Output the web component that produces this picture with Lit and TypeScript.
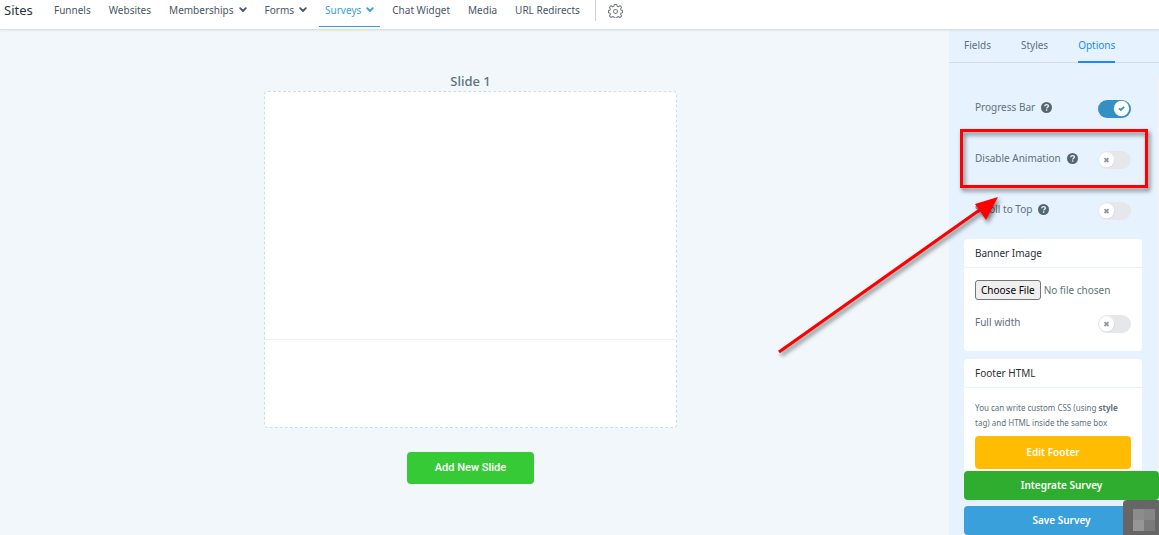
import { LitElement, html, svg, css, nothing } from "lit";
import { customElement, property, state } from "lit/decorators.js";
import { classMap } from "lit/directives/class-map.js";

const chevron = html`<svg class="chevron" viewBox="0 0 8 6" aria-hidden="true">
  <path d="M1.2 1.2 4 4 6.8 1.2" fill="none" stroke="currentColor" stroke-width="1.8" stroke-linecap="round" stroke-linejoin="round" />
</svg>`;

const help = html`<svg class="help" viewBox="0 0 12 12" role="img" aria-label="Help">
  <circle cx="6" cy="6" r="6" fill="currentColor" />
  <path d="M4 4.7c.1-1.2.9-1.9 2.1-1.9s2 .7 2 1.6c0 1.3-1.9 1.3-1.9 2.7" fill="none" stroke="#e6f2fe" stroke-width="1.5" />
  <rect x="5.3" y="8" width="1.7" height="1.6" rx=".5" fill="#e6f2fe" />
</svg>`;

@customElement("toggle-row")
export class ToggleRow extends LitElement {
  @property() label = "";
  @property({ type: Boolean }) on = false;
  @property({ type: Boolean }) hint = false;

  static styles = css`
    :host {
      display: flex;
      justify-content: space-between;
      align-items: flex-start;
      color: #607179;
    }
    .text {
      display: flex;
      align-items: center;
      gap: 6px;
      line-height: 14px;
    }
    .help {
      width: 11px;
      height: 11px;
      color: #546672;
    }
    .switch {
      display: grid;
      width: 33px;
      height: 18px;
    }
    .switch > * {
      grid-area: 1 / 1;
    }
    .box {
      appearance: none;
      margin: 0;
      border-radius: 9px;
      background: #e6e7eb;
      cursor: pointer;
    }
    .box:checked {
      background: #3490c4;
    }
    .knob {
      width: 33px;
      height: 18px;
      pointer-events: none;
    }
  `;

  render() {
    return html`
      <span class="text"><label for="box">${this.label}</label>${this.hint ? help : nothing}</span>
      <span class="switch">
        <input
          class="box"
          id="box"
          type="checkbox"
          .checked=${this.on}
          @change=${(e: Event) => (this.on = (e.target as HTMLInputElement).checked)}
        />
        <svg class="knob" viewBox="0 0 33 18" aria-hidden="true">
          ${this.on
            ? svg`<circle cx="23.5" cy="8.5" r="7.7" fill="#fff" />
                <path d="M21 8.3 22.8 10 26.2 6.9" fill="none" stroke="#3490c4" stroke-width="1.8" />`
            : svg`<circle cx="9" cy="9.4" r="7.6" fill="#cfd3da" />
                <circle cx="8.6" cy="8.8" r="7.6" fill="#fff" />
                <path d="M6.5 7.2 10.5 11M10.5 7.2 6.5 11" fill="none" stroke="#9097a8" stroke-width="1.8" />`}
        </svg>
      </span>
    `;
  }
}

@customElement("app-root")
export class AppRoot extends LitElement {
  @state() private section = "Surveys";
  @state() private tab = "Options";

  private links = [
    { name: "Funnels" },
    { name: "Websites" },
    { name: "Memberships", menu: true },
    { name: "Forms", menu: true },
    { name: "Surveys", menu: true },
    { name: "Chat Widget" },
    { name: "Media" },
    { name: "URL Redirects" },
  ];

  static styles = css`
    :host {
      display: grid;
      grid-template-rows: auto 1fr;
      position: relative;
      height: 100vh;
      overflow: hidden;
      background: #f1f7fa;
      color: #607179;
      font: 10px/15px "Noto Sans", "Open Sans", sans-serif;
    }
    * {
      box-sizing: border-box;
    }
    a {
      color: inherit;
      text-decoration: none;
    }
    .topbar {
      display: flex;
      align-items: flex-start;
      height: 30px;
      padding-left: 4px;
      background: #fff;
      border-bottom: 1px solid #d9e0e4;
      box-shadow: 0 1px 2px #0000000f;
      color: #4a5565;
      z-index: 1;
    }
    .title {
      width: 44px;
      margin: 0;
      font-size: 13px;
      line-height: 20px;
      font-weight: 400;
      color: #2a3342;
    }
    .nav {
      display: flex;
      gap: 6px;
    }
    .link {
      display: flex;
      align-items: center;
      gap: 5px;
      height: 27px;
      padding: 0 6px 6px;
      border-bottom: 1px solid transparent;
      white-space: nowrap;
    }
    .link.current {
      color: #37a0dd;
      border-color: #37a0dd;
    }
    .chevron {
      width: 8px;
      height: 6px;
    }
    .settings {
      display: flex;
      height: 21px;
      margin-left: 9px;
      padding: 3px 12px 0;
      border: 0;
      border-left: 1px solid #cfd3d8;
      background: none;
      color: #777d85;
    }
    .gear {
      width: 15px;
      height: 15px;
    }
    .body {
      display: grid;
      grid-template-columns: 1fr 210px;
      min-height: 0;
    }
    .canvas {
      display: flex;
      flex-direction: column;
      align-items: center;
      padding: 41px 8px 0 0;
    }
    .slide-title {
      margin: 0;
      font-size: 13px;
      line-height: 20px;
      font-weight: 500;
    }
    .slide {
      display: grid;
      grid-template-rows: 247px 88px;
      width: 100%;
      max-width: 413px;
      border: 1px dashed #cbdfe9;
      border-radius: 4px;
      background: #fff;
    }
    .slide-foot {
      border-top: 1px solid #eef2f5;
    }
    .button {
      border: 0;
      border-radius: 4px;
      color: #fff;
      font: 600 10px/15px "Noto Sans", "Open Sans", sans-serif;
      cursor: pointer;
    }
    .add {
      margin-top: 24px;
      width: 127px;
      height: 32px;
      padding-bottom: 3px;
      background: #37ca37;
      font: 500 11px/15px Roboto, sans-serif;
    }
    .panel {
      display: flex;
      flex-direction: column;
      min-height: 0;
      background: #e6f2fe;
    }
    .tabs {
      display: flex;
      gap: 30px;
      height: 33px;
      padding-left: 15px;
      border-bottom: 1px solid #d3dce3;
    }
    .tab {
      height: 33px;
      padding: 0;
      border: 0;
      border-bottom: 2px solid transparent;
      background: none;
      color: #607179;
      font: inherit;
    }
    .tab.current {
      color: #188bf6;
      border-color: #188bf6;
    }
    .scroll {
      flex: 1;
      min-height: 0;
      overflow: hidden;
      margin-top: 15px;
      border-right: 2px solid #f0f2f4;
      padding: 22px 15px 0;
    }
    .rows {
      display: grid;
      gap: 33px;
      padding: 0 11px 19px;
    }
    .card {
      margin-bottom: 8px;
      border-radius: 4px;
      background: #fff;
    }
    .card-title {
      margin: 0;
      padding: 7px 11px 6px;
      border-bottom: 1px solid #e6f2fe;
      font-size: 10px;
      line-height: 15px;
      font-weight: 400;
      color: #2a3135;
    }
    .card-body {
      padding: 12px 11px 18px;
    }
    .file {
      display: block;
      width: 100%;
      margin-bottom: 15px;
      font: inherit;
      color: #607179;
    }
    .file::file-selector-button {
      height: 20px;
      margin-right: 3px;
      padding: 0 5px;
      border: 1px solid #767676;
      border-radius: 3px;
      background: #efefef;
      color: #000;
      font: inherit;
    }
    .note {
      margin: 0 0 6px;
      font-size: 8px;
      line-height: 15px;
    }
    .edit {
      width: 100%;
      height: 33px;
      background: #ffbc00;
    }
    .actions {
      display: grid;
      grid-auto-rows: 29px;
      gap: 6px;
      padding-left: 15px;
    }
    .integrate {
      background: #2fad2f;
    }
    .save {
      background: #39a0dc;
    }
    .badge {
      position: absolute;
      right: 0;
      bottom: 0;
      display: grid;
      grid-template-columns: 11px 11px;
      grid-auto-rows: 11px;
      align-content: start;
      width: 36px;
      height: 35px;
      padding: 9px 0 0 10px;
      border: 0;
      border-radius: 4px 0 0 0;
      background: #666;
    }
    .px-a {
      background: #8c8c8c;
    }
    .px-b {
      background: #868686;
    }
    .px-c {
      background: #969696;
    }
    .px-d {
      background: #7a7a7a;
    }
    .callout {
      position: absolute;
      top: 0;
      right: 0;
      width: 400px;
      height: 380px;
      pointer-events: none;
      filter: drop-shadow(2px 3px 2px #00000080);
      z-index: 2;
    }
  `;

  render() {
    return html`
      <header class="topbar">
        <h1 class="title">Sites</h1>
        <nav class="nav">
          ${this.links.map(
            (l) => html`<a
              class=${classMap({ link: true, current: l.name === this.section })}
              href="#"
              @click=${() => (this.section = l.name)}
              >${l.name}${l.menu ? chevron : nothing}</a
            >`
          )}
        </nav>
        <button class="settings" aria-label="Settings">
          <svg class="gear" viewBox="0 0 16 16" fill="none" stroke="currentColor" stroke-width="1.1" stroke-linejoin="round">
            <circle cx="8" cy="9" r="2.1" />
            <path
              d="M6.7 1.5h2.6l.4 1.9 1.3.6 1.7-1.1 1.8 1.8-1.1 1.7.6 1.2 1.5.3v2.5l-1.5.3-.6 1.3 1.1 1.7-1.8 1.8-1.7-1.1-1.3.5-.4 1.1H6.7l-.4-1.1-1.3-.5-1.7 1.1-1.8-1.8 1.1-1.7L2 10.7l-1.5-.3V7.9L2 7.6l.6-1.2-1.1-1.7 1.8-1.8L5 4l1.3-.6z"
            />
          </svg>
        </button>
      </header>

      <div class="body">
        <main class="canvas">
          <h2 class="slide-title">Slide 1</h2>
          <section class="slide">
            <div class="slide-body"></div>
            <div class="slide-foot"></div>
          </section>
          <button class="button add">Add New Slide</button>
        </main>

        <aside class="panel">
          <div class="tabs">
            ${["Fields", "Styles", "Options"].map(
              (t) => html`<button
                class=${classMap({ tab: true, current: t === this.tab })}
                @click=${() => (this.tab = t)}
              >${t}</button>`
            )}
          </div>
          <div class="scroll">
            <div class="rows">
              <toggle-row label="Progress Bar" hint on></toggle-row>
              <toggle-row label="Disable Animation" hint></toggle-row>
              <toggle-row label="Scroll to Top" hint></toggle-row>
            </div>
            <section class="card">
              <h3 class="card-title" id="banner">Banner Image</h3>
              <div class="card-body">
                <input class="file" type="file" aria-labelledby="banner" />
                <toggle-row label="Full width"></toggle-row>
              </div>
            </section>
            <section class="card">
              <h3 class="card-title">Footer HTML</h3>
              <div class="card-body">
                <p class="note">You can write custom CSS (using <strong>style</strong> tag) and HTML inside the same box</p>
                <button class="button edit">Edit Footer</button>
              </div>
            </section>
          </div>
          <div class="actions">
            <button class="button integrate">Integrate Survey</button>
            <button class="button save">Save Survey</button>
          </div>
        </aside>
      </div>

      <button class="badge" aria-label="Open widget">
        <span class="px-a"></span><span class="px-b"></span><span class="px-c"></span><span class="px-d"></span>
      </button>
      <svg class="callout" viewBox="0 0 400 380" aria-hidden="true">
        <rect x="202.5" y="130.5" width="185" height="56" fill="none" stroke="#f00" stroke-width="3" />
        <path d="M20 352 222 209" stroke="#f00" stroke-width="3.2" />
        <path d="M239 197 216 204 227 220z" fill="#f00" />
      </svg>
    `;
  }
}
